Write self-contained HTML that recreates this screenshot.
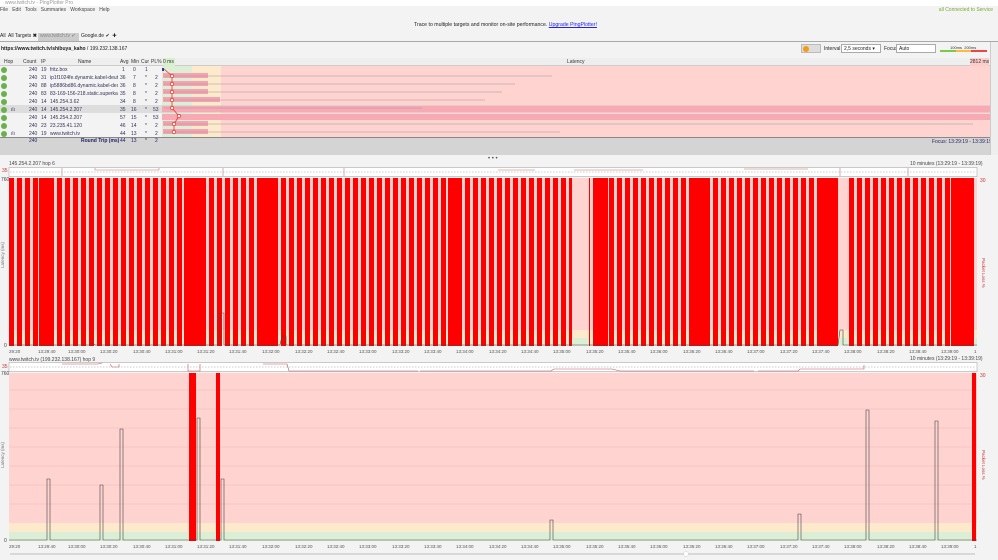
<!DOCTYPE html>
<html><head><meta charset="utf-8"><style>
*{margin:0;padding:0;box-sizing:border-box}
body{width:998px;height:560px;overflow:hidden;background:#f3f3f3;font-family:"Liberation Sans",sans-serif;font-size:5px;color:#333;position:relative}
.a{position:absolute;white-space:nowrap}
.row{position:absolute;left:0;width:162px;height:8px;font-size:5px;line-height:8px;color:#335;white-space:nowrap}
.row span{position:absolute}
.row span.n{width:68px;overflow:hidden}
.c{width:6px;height:6px;border-radius:50%;background:#6ab04c;top:1px;left:1px;position:absolute}
.r{text-align:right}
</style></head><body>
<div class="a" style="left:0;top:0;width:998px;height:6px;background:#fff"></div>
<div class="a" style="left:5px;top:0;color:#999;font-size:5px">www.twitch.tv - PingPlotter Pro</div>
<div class="a" style="left:0;top:7px;font-size:5px;color:#444">File&nbsp;&nbsp; Edit&nbsp;&nbsp; Tools&nbsp;&nbsp; Summaries&nbsp;&nbsp; Workspace&nbsp;&nbsp; Help</div>
<div class="a" style="right:5px;top:7px;color:#7a3;font-size:5px">all Connected to Service</div>
<div class="a" style="left:414px;top:22px;font-size:5.2px;color:#222">Trace to multiple targets and monitor on-site performance. <u style="color:#22e">Upgrade PingPlotter!</u></div>
<div class="a" style="left:0;top:33px;font-size:5px;color:#222">All&nbsp; All Targets <b>✖</b></div>
<div class="a" style="left:38px;top:33px;width:41px;height:8px;background:#ccc;color:#888;padding-left:2px">www.twitch.tv ✔</div>
<div class="a" style="left:81px;top:33px;color:#222">Google.de ✔&nbsp; ✚</div>
<div class="a" style="left:0;top:41px;width:998px;height:1px;background:#aaa"></div>
<div class="a" style="left:1px;top:46px;font-size:5px;color:#222"><b>https://www.twitch.tv/shibuya_kaho</b> / 199.232.138.167</div>
<div class="a" style="left:801px;top:44px;width:20px;height:9px;background:#ddd;border:1px solid #bbb"></div>
<div class="a" style="left:803px;top:46px;width:6px;height:6px;border-radius:50%;background:#f39c12"></div>
<div class="a" style="left:824px;top:46px;color:#222">Interval</div>
<div class="a" style="left:841px;top:44px;width:40px;height:9px;background:#fff;border:1px solid #aaa;padding:1px 2px;color:#222">2,5 seconds ▾</div>
<div class="a" style="left:884px;top:46px;color:#222">Focus</div>
<div class="a" style="left:896px;top:44px;width:40px;height:9px;background:#fff;border:1px solid #aaa;padding:1px 2px;color:#222">Auto</div>
<div class="a" style="left:940px;top:50px;width:16px;height:2px;background:#7c4"></div>
<div class="a" style="left:956px;top:50px;width:15px;height:2px;background:#fb3"></div>
<div class="a" style="left:971px;top:50px;width:16px;height:2px;background:#e44"></div>
<div class="a" style="left:950px;top:45px;font-size:4px">100ms&nbsp;&nbsp;200ms</div>
<div class="a" style="left:0;top:58px;width:990px;height:8px;background:#eee;border-bottom:1px solid #ccc;color:#333;line-height:8px">
<span class="a" style="left:4px">Hop</span><span class="a" style="left:23px">Count</span><span class="a" style="left:41px">IP</span><span class="a" style="left:78px">Name</span><span class="a" style="left:120px">Avg</span><span class="a" style="left:131px">Min</span><span class="a" style="left:141px">Cur</span><span class="a" style="left:151px">PL%</span><span class="a" style="left:163px;background:#d8f0d0;width:12px">0 ms</span><span class="a" style="left:567px">Latency</span><span class="a" style="left:970px;background:#fcc">2812 ms</span></div>
<div class="a" style="left:162px;top:66px;width:30px;height:71px;background:#dcefd6"></div>
<div class="a" style="left:192px;top:66px;width:29px;height:71px;background:#fde9cc"></div>
<div class="a" style="left:221px;top:66px;width:769px;height:71px;background:#ffd3d0"></div>
<div class="a" style="left:0;top:105px;width:990px;height:8px;background:rgba(200,200,200,.5)"></div>
<div class="a" style="left:162px;top:106px;width:828px;height:6px;background:#f7a9b4"></div>
<div class="a" style="left:162px;top:114px;width:828px;height:6px;background:#f7a9b4"></div>
<svg class="a" style="left:162px;top:66px" width="828" height="72">
<g fill="#f4a3b0"><rect x="1" y="7" width="45" height="5"/><rect x="1" y="15" width="45" height="5"/><rect x="1" y="23" width="45" height="5"/><rect x="1" y="31" width="57" height="5"/><rect x="1" y="55" width="45" height="5"/><rect x="1" y="63" width="45" height="5"/></g>
<g stroke="#999" stroke-width=".6"><line x1="2" y1="10" x2="390" y2="10"/><line x1="2" y1="18" x2="353" y2="18"/><line x1="2" y1="26" x2="340" y2="26"/><line x1="2" y1="34" x2="323" y2="34"/><line x1="2" y1="42" x2="260" y2="42"/><line x1="2" y1="58" x2="811" y2="58"/><line x1="2" y1="66" x2="398" y2="66"/></g>
<polyline points="2,3 10,10 10,18 10,26 10,34 10,42 17,50 12,58 12,66" fill="none" stroke="#e33" stroke-width=".8"/>
<g fill="#fff" stroke="#e33" stroke-width=".8"><circle cx="10" cy="10" r="1.7"/><circle cx="10" cy="18" r="1.7"/><circle cx="10" cy="26" r="1.7"/><circle cx="10" cy="34" r="1.7"/><circle cx="10" cy="42" r="1.7"/><circle cx="17" cy="50" r="1.7"/><circle cx="12" cy="58" r="1.7"/><circle cx="12" cy="66" r="1.7"/></g>
<rect x="0" y="2" width="2" height="3" fill="#33a"/>
</svg>
<div class="row" style="top:66px"><i class="c"></i><span style="left:29px">240</span><span style="left:41px">19</span><span class="n" style="left:50px">fritz.box</span><span style="left:122px">1</span><span style="left:133px">0</span><span style="left:145px">1</span></div>
<div class="row" style="top:74px"><i class="c"></i><span style="left:29px">240</span><span style="left:41px">31</span><span class="n" style="left:50px">ip1f1024fe.dynamic.kabel-deuts</span><span style="left:120px">36</span><span style="left:133px">7</span><span style="left:145px">*</span><span style="left:155px">2</span></div>
<div class="row" style="top:82px"><i class="c"></i><span style="left:29px">240</span><span style="left:41px">88</span><span class="n" style="left:50px">ip5886bd86.dynamic.kabel-deut</span><span style="left:120px">36</span><span style="left:133px">8</span><span style="left:145px">*</span><span style="left:155px">2</span></div>
<div class="row" style="top:90px"><i class="c"></i><span style="left:29px">240</span><span style="left:41px">83</span><span class="n" style="left:50px">83-169-156-218.static.superkab</span><span style="left:120px">35</span><span style="left:133px">8</span><span style="left:145px">*</span><span style="left:155px">2</span></div>
<div class="row" style="top:98px"><i class="c"></i><span style="left:29px">240</span><span style="left:41px">14</span><span class="n" style="left:50px">145.254.3.62</span><span style="left:120px">34</span><span style="left:133px">8</span><span style="left:145px">*</span><span style="left:155px">2</span></div>
<div class="row" style="top:106px"><i class="c"></i><span style="left:11px">ılı</span><span style="left:29px">240</span><span style="left:41px">14</span><span class="n" style="left:50px">145.254.2.207</span><span style="left:120px">35</span><span style="left:131px">16</span><span style="left:145px">*</span><span style="left:153px">53</span></div>
<div class="row" style="top:114px"><i class="c"></i><span style="left:29px">240</span><span style="left:41px">14</span><span class="n" style="left:50px">145.254.2.207</span><span style="left:120px">57</span><span style="left:131px">15</span><span style="left:145px">*</span><span style="left:153px">53</span></div>
<div class="row" style="top:122px"><i class="c"></i><span style="left:29px">240</span><span style="left:41px">23</span><span class="n" style="left:50px">23.235.41.120</span><span style="left:120px">46</span><span style="left:131px">14</span><span style="left:145px">*</span><span style="left:155px">2</span></div>
<div class="row" style="top:130px"><i class="c"></i><span style="left:11px">ılı</span><span style="left:29px">240</span><span style="left:41px">19</span><span class="n" style="left:50px">www.twitch.tv</span><span style="left:120px">44</span><span style="left:131px">13</span><span style="left:145px">*</span><span style="left:155px">2</span></div>
<div class="a" style="left:0;top:137px;width:990px;height:1px;background:#888"></div>
<div class="a" style="left:0;top:138px;width:990px;height:17px;background:#d4d4d4"></div>
<div class="row" style="top:137px;color:#226"><span style="left:29px">240</span><span style="left:81px;font-weight:bold">Round Trip (ms)</span><span style="left:120px">44</span><span style="left:131px">13</span><span style="left:145px">*</span><span style="left:155px">2</span></div>
<div class="a" style="left:932px;top:139px;color:#226">Focus: 13:29:19 - 13:39:19</div>
<div class="a" style="left:990px;top:42px;width:8px;height:113px;background:#eee;border-left:1px solid #ccc"></div>
<div class="a" style="left:488px;top:156px;font-size:6px;color:#555">• • •</div>

<svg class="a" style="left:0;top:158px" width="998" height="402">
<defs>
<pattern id="bars" x="9" y="0" width="8" height="10" patternUnits="userSpaceOnUse"><rect width="5" height="10" fill="#f00"/></pattern>
</defs>
<g font-family="Liberation Sans" font-size="5" fill="#444">
<text x="9" y="7">145.254.2.207 hop 6</text>
<text x="910" y="7">10 minutes (13:29:19 - 13:39:19)</text>
<text x="2" y="14" fill="#c33">35</text><text x="1" y="23">760</text><text x="4" y="189">0</text>
</g>
<rect x="9" y="9.5" width="968" height="9" fill="#fff" stroke="#aaa" stroke-width=".6"/>
<line x1="10" y1="14" x2="976" y2="14" stroke="#999" stroke-width=".5" stroke-dasharray="1.5 1.5"/>
<path d="M62,10V18M95,10V12H159V10M223,10V18M344,10V18M498,12H535M574,12H643M744,11H808M840,10V18M908,10V18" stroke="#b77" stroke-width=".6" fill="none"/>
<rect x="9" y="20" width="968" height="168" fill="#ffd3d0"/>
<rect x="9" y="172" width="968" height="8" fill="#fde9cc"/>
<rect x="9" y="180" width="968" height="8" fill="#dcefd6"/>
<rect x="9" y="20" width="968" height="168" fill="url(#bars)"/>
<g fill="#f00"><rect x="39" y="20" width="12" height="168"/><rect x="184" y="20" width="17" height="168"/><rect x="257" y="20" width="20" height="168"/><rect x="595" y="20" width="13" height="168"/><rect x="692" y="20" width="17" height="168"/><rect x="821" y="20" width="17" height="168"/><rect x="951" y="20" width="18" height="168"/><rect x="448" y="20" width="10" height="168"/></g>
<g fill="#ffd3d0"><rect x="572" y="20" width="17" height="152"/><rect x="840" y="20" width="9" height="152"/></g>
<g fill="#fde9cc"><rect x="572" y="172" width="17" height="8"/><rect x="840" y="172" width="9" height="8"/></g>
<g fill="#dcefd6"><rect x="572" y="180" width="17" height="8"/><rect x="840" y="180" width="9" height="8"/></g>
<polyline points="9,187 92,187 92,185 95,187 220,187 220,155 224,155 224,187 280,187 282,178 286,178 286,187 838,187 840,172 843,172 843,187 977,187" fill="none" stroke="#444" stroke-width=".6"/>
<rect x="977" y="20" width="8" height="168" fill="#f3f3f3"/>
<text x="980" y="24" font-size="5" fill="#c33" font-family="Liberation Sans">30</text>
<text x="4" y="110" font-size="4.5" fill="#777" font-family="Liberation Sans" transform="rotate(-90 4 110)">Latency (ms)</text>
<text x="982" y="100" font-size="4.5" fill="#c33" font-family="Liberation Sans" transform="rotate(90 982 100)">Packet Loss %</text>
<g font-family="Liberation Sans" font-size="4.5" fill="#555" id="ax1">
<text x="9" y="195">29:20</text><text x="38" y="195">13:29:40</text><text x="68" y="195">13:30:00</text><text x="100" y="195">13:30:20</text><text x="133" y="195">13:30:40</text><text x="165" y="195">13:31:00</text><text x="197" y="195">13:31:20</text><text x="229" y="195">13:31:40</text><text x="262" y="195">13:32:00</text><text x="295" y="195">13:32:20</text><text x="327" y="195">13:32:40</text><text x="359" y="195">13:33:00</text><text x="392" y="195">13:33:20</text><text x="424" y="195">13:33:40</text><text x="456" y="195">13:34:00</text><text x="489" y="195">13:34:20</text><text x="521" y="195">13:34:40</text><text x="553" y="195">13:35:00</text><text x="586" y="195">13:35:20</text><text x="618" y="195">13:35:40</text><text x="650" y="195">13:36:00</text><text x="683" y="195">13:36:20</text><text x="715" y="195">13:36:40</text><text x="747" y="195">13:37:00</text><text x="780" y="195">13:37:20</text><text x="812" y="195">13:37:40</text><text x="844" y="195">13:38:00</text><text x="877" y="195">13:38:20</text><text x="909" y="195">13:38:40</text><text x="941" y="195">13:39:00</text><text x="974" y="195">1</text>
</g>
<g font-family="Liberation Sans" font-size="5" fill="#444">
<text x="9" y="203">www.twitch.tv (199.232.138.167) hop 9</text>
<text x="910" y="202">10 minutes (13:29:19 - 13:39:19)</text>
<text x="2" y="210" fill="#c33">35</text><text x="1" y="217">760</text><text x="4" y="384">0</text>
</g>
<rect x="9" y="204.5" width="968" height="9" fill="#fff" stroke="#aaa" stroke-width=".6"/>
<line x1="10" y1="209" x2="976" y2="209" stroke="#999" stroke-width=".5" stroke-dasharray="1.5 1.5"/>
<path d="M62,206H98L102,205M110,206L112,209H119V206M188,206V213H200V206M263,206H287L289,213H418M420,213H551L554,211H612L620,213H754M758,213H798L800,211H864V207" stroke="#b55" stroke-width=".6" fill="none"/>
<rect x="9" y="215" width="968" height="168" fill="#ffd3d0"/>
<rect x="9" y="365" width="968" height="9" fill="#fde9cc"/>
<rect x="9" y="374" width="968" height="9" fill="#dcefd6"/>
<g stroke="#f0b8b5" stroke-width=".5"><line x1="9" y1="232" x2="977" y2="232"/><line x1="9" y1="251" x2="977" y2="251"/><line x1="9" y1="270" x2="977" y2="270"/><line x1="9" y1="289" x2="977" y2="289"/><line x1="9" y1="308" x2="977" y2="308"/><line x1="9" y1="327" x2="977" y2="327"/><line x1="9" y1="346" x2="977" y2="346"/></g>
<g fill="#f00"><rect x="189" y="215" width="7" height="168"/><rect x="216" y="215" width="4" height="168"/><rect x="972" y="215" width="4" height="168"/></g>
<polyline fill="none" stroke="#444" stroke-width=".6" points="9,382 47,382 47,321 50,321 50,382 100,382 100,327 103,327 103,382 120,382 120,271 123,271 123,382 197,382 197,260 200,260 200,382 221,382 221,321 224,321 224,382 550,382 550,362 553,362 553,382 798,382 798,356 801,356 801,382 866,382 866,252 869,252 869,382 935,382 935,263 938,263 938,382 977,382"/>
<rect x="977" y="215" width="8" height="168" fill="#f3f3f3"/>
<text x="980" y="219" font-size="5" fill="#c33" font-family="Liberation Sans">30</text>
<text x="4" y="310" font-size="4.5" fill="#777" font-family="Liberation Sans" transform="rotate(-90 4 310)">Latency (ms)</text>
<text x="982" y="292" font-size="4.5" fill="#c33" font-family="Liberation Sans" transform="rotate(90 982 292)">Packet Loss %</text>
<use href="#ax1" y="195"/>
<line x1="10" y1="396" x2="975" y2="396" stroke="#aaa" stroke-width=".7"/>
<circle cx="686" cy="396" r="2.5" fill="#fff" stroke="#ccc" stroke-width=".5"/>
</svg>
</body></html>
